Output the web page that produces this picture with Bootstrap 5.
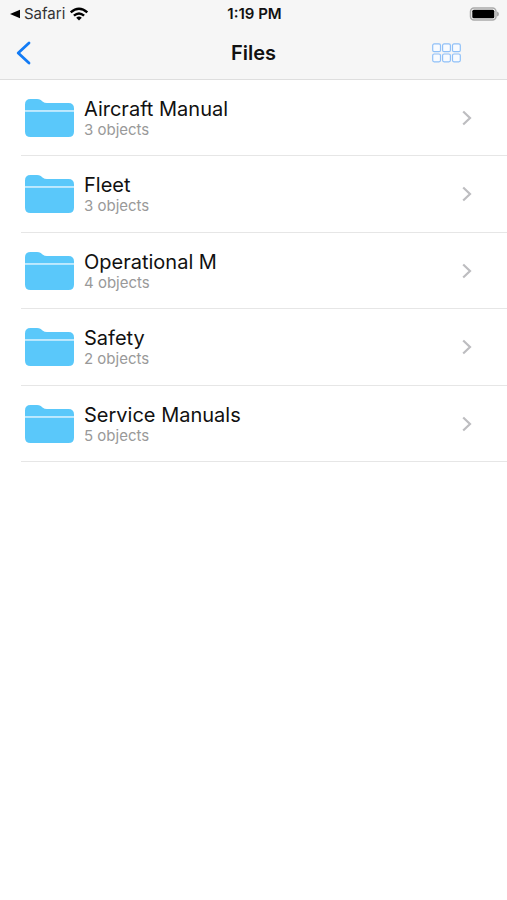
<!DOCTYPE html>
<html lang="en">
<head>
<meta charset="utf-8">
<meta name="viewport" content="width=device-width, initial-scale=1">
<title>Files</title>
<link href="https://cdn.jsdelivr.net/npm/bootstrap@5.3.0/dist/css/bootstrap.min.css" rel="stylesheet">
<style>
body{font-family:Inter,"Liberation Sans",sans-serif;background:#fff;color:#111}
.top-area{background:#f6f6f6;border-bottom:1px solid #dedede}
.three-col{display:grid;grid-template-columns:1fr auto 1fr;align-items:center}
.status{height:27px;font-size:15px;line-height:20px;padding:0 8px 0 10px}
.status-app{color:#333;gap:4px}
.title-bar{height:52px;padding:0 12px}
.title-bar h1{font-size:20px;line-height:24px}
.grid-btn{margin-right:34px}
.file-list{padding-left:21px}
.file-row{height:76px;border-bottom:1px solid #e6e6e6}
.file-row:nth-child(even){height:77px}
.file-link{color:#111;padding:0 35px 0 4px;gap:9px}
.file-name{font-size:20px;line-height:24px}
.file-count{font-size:15px;line-height:18px;color:#999}
</style>
<script src="https://cdn.jsdelivr.net/npm/bootstrap@5.3.0/dist/js/bootstrap.bundle.min.js"></script>
</head>
<body>
<svg class="d-none" aria-hidden="true">
  <symbol id="folder" viewBox="0 0 50 40">
    <path fill="#5ac8fa" d="M0 12V6.500Q0 1 5.500 1H12C15 1 16 2.200 17.500 3.500Q19.500 5 22 5H43.500Q49 5 49 10.500V12Z"/>
    <path fill="#5ac8fa" d="M0 13.500H49V33.500Q49 39 43.500 39H5.500Q0 39 0 33.500Z"/>
    <path fill="#bfe9fd" d="M0 12H49V13.500H0Z"/>
  </symbol>
  <symbol id="chevron" viewBox="0 0 10 16">
    <path fill="none" stroke="#bdbdc0" stroke-width="2.200" d="M1.200 1.500L8 8L1.200 14.500"/>
  </symbol>
</svg>
<header class="top-area">
  <div class="status three-col">
    <div class="status-app d-flex align-items-center">
      <a href="#" class="d-flex align-items-center text-reset text-decoration-none" aria-label="Back to Safari">
        <svg class="me-1" width="10" height="10" viewBox="0 0 10 10"><path fill="#000" d="M0 5L10 .7V9.300Z"/></svg>Safari</a>
      <svg width="20" height="14" viewBox="0 0 20 14" aria-label="Wi-Fi">
        <g fill="none" stroke="#000" stroke-width="2.400"><path d="M1.700 5.400Q10 -2.100 18.300 5.400"/><path d="M4.900 8.700Q10 4.100 15.100 8.700"/></g>
        <path fill="#000" d="M7.200 10.700Q10 8.500 12.800 10.700L10 13.500Z"/>
      </svg>
    </div>
    <div class="fw-semibold">1:19 PM</div>
    <svg class="ms-auto" width="30" height="14" viewBox="0 0 30 14" aria-label="Battery full">
      <rect x="1.500" y="1" width="25.500" height="12" rx="3.500" fill="#f6f6f6" stroke="#aaa" stroke-width="1.500"/>
      <rect x="3.300" y="2.700" width="22" height="8.600" rx="1.500" fill="#000"/>
      <path fill="#aaa" d="M28 4.500Q30 5 30 7T28 9.500Z"/>
    </svg>
  </div>
  <div class="title-bar three-col">
    <button type="button" class="btn border-0 p-1 me-auto d-flex" aria-label="Back">
      <svg width="15" height="24" viewBox="0 0 15 24"><path fill="none" stroke="#127bf5" stroke-width="2.800" stroke-linecap="round" stroke-linejoin="round" d="M13 2L2.200 12L13 22"/></svg>
    </button>
    <h1 class="m-0 fw-semibold">Files</h1>
    <button type="button" class="grid-btn btn border-0 p-0 ms-auto d-flex" aria-label="Grid view">
      <svg width="29" height="20" viewBox="0 0 29 20"><g fill="#f8fbff" stroke="#8fc0f8" stroke-width="1.200">
        <rect x=".7" y=".9" width="7.800" height="7.800" rx="1.500"/><rect x="10.600" y=".9" width="7.800" height="7.800" rx="1.500"/><rect x="20.500" y=".9" width="7.800" height="7.800" rx="1.500"/>
        <rect x=".7" y="11" width="7.800" height="7.800" rx="1.500"/><rect x="10.600" y="11" width="7.800" height="7.800" rx="1.500"/><rect x="20.500" y="11" width="7.800" height="7.800" rx="1.500"/></g></svg>
    </button>
  </div>
</header>
<main>
  <ul class="file-list list-unstyled m-0">
    <li class="file-row"><a href="#" class="file-link d-flex align-items-center h-100 text-decoration-none"><svg width="50" height="40" aria-hidden="true"><use href="#folder"/></svg><span class="flex-grow-1"><span class="file-name d-block">Aircraft Manual</span><span class="file-count d-block">3 objects</span></span><svg width="10" height="16" aria-hidden="true"><use href="#chevron"/></svg></a></li>
    <li class="file-row"><a href="#" class="file-link d-flex align-items-center h-100 text-decoration-none"><svg width="50" height="40" aria-hidden="true"><use href="#folder"/></svg><span class="flex-grow-1"><span class="file-name d-block">Fleet</span><span class="file-count d-block">3 objects</span></span><svg width="10" height="16" aria-hidden="true"><use href="#chevron"/></svg></a></li>
    <li class="file-row"><a href="#" class="file-link d-flex align-items-center h-100 text-decoration-none"><svg width="50" height="40" aria-hidden="true"><use href="#folder"/></svg><span class="flex-grow-1"><span class="file-name d-block">Operational M</span><span class="file-count d-block">4 objects</span></span><svg width="10" height="16" aria-hidden="true"><use href="#chevron"/></svg></a></li>
    <li class="file-row"><a href="#" class="file-link d-flex align-items-center h-100 text-decoration-none"><svg width="50" height="40" aria-hidden="true"><use href="#folder"/></svg><span class="flex-grow-1"><span class="file-name d-block">Safety</span><span class="file-count d-block">2 objects</span></span><svg width="10" height="16" aria-hidden="true"><use href="#chevron"/></svg></a></li>
    <li class="file-row"><a href="#" class="file-link d-flex align-items-center h-100 text-decoration-none"><svg width="50" height="40" aria-hidden="true"><use href="#folder"/></svg><span class="flex-grow-1"><span class="file-name d-block">Service Manuals</span><span class="file-count d-block">5 objects</span></span><svg width="10" height="16" aria-hidden="true"><use href="#chevron"/></svg></a></li>
  </ul>
</main>
</body>
</html>
